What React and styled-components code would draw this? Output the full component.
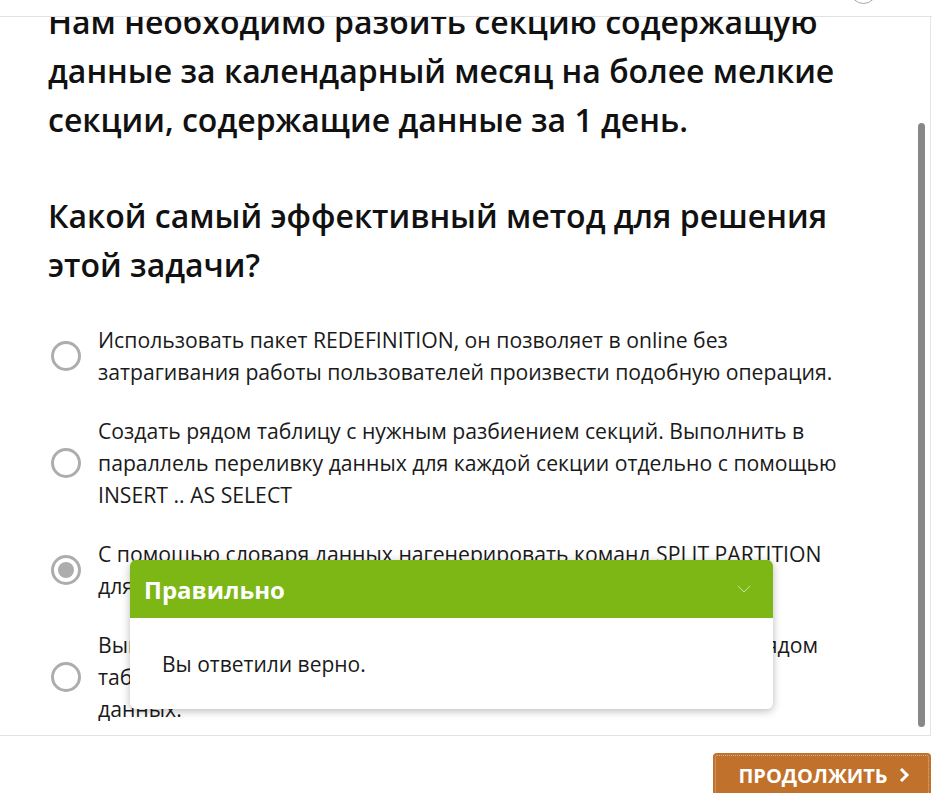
import React, { useLayoutEffect, useRef } from "react";
import styled, { createGlobalStyle } from "styled-components";

const GlobalStyle = createGlobalStyle`
  html, body {
    margin: 0;
    padding: 0;
    background: #fff;
  }
  body {
    font-family: "Open Sans", "Noto Sans", sans-serif;
    color: #1a1a1a;
  }
`;

const options = [
  {
    id: 1,
    text: "Использовать пакет REDEFINITION, он позволяет в online без затрагивания работы пользователей произвести подобную операция.",
  },
  {
    id: 2,
    text: "Создать рядом таблицу с нужным разбиением секций. Выполнить в параллель переливку данных для каждой секции отдельно с помощью INSERT .. AS SELECT",
  },
  {
    id: 3,
    text: "С помощью словаря данных нагенерировать команд SPLIT PARTITION\nдля каждого дня.",
  },
  {
    id: 4,
    text: "Выгрузить данные во внешний файл и создать новую таблицу рядом\nтаблицу с нужным разбиением и залить туда выгрузку всех.\nданных.",
  },
];

const App = () => {
  const scrollRef = useRef(null);

  useLayoutEffect(() => {
    if (scrollRef.current) scrollRef.current.scrollTop = 44;
  }, []);

  return (
    <Page>
      <GlobalStyle />
      <TopBar>
        <TopCircle />
      </TopBar>
      <ScrollFrame>
        <ScrollArea ref={scrollRef}>
          <Content>
            <Heading>
              Нам необходимо разбить секцию содержащую данные за календарный
              месяц на более мелкие секции, содержащие данные за 1 день.
            </Heading>
            <Heading>Какой самый эффективный метод для решения этой задачи?</Heading>
            <OptionList>
              {options.map((o) => (
                <Option key={o.id}>
                  <Radio $checked={o.id === 3} />
                  <OptionText>{o.text}</OptionText>
                </Option>
              ))}
            </OptionList>
          </Content>
        </ScrollArea>
        <ScrollThumb />
      </ScrollFrame>
      <Footer>
        <ContinueButton>
          Продолжить
          <svg width="12" height="16" viewBox="0 0 12 16">
            <path d="M3 2 L9 8 L3 14" fill="none" stroke="#fff" strokeWidth="3" />
          </svg>
        </ContinueButton>
      </Footer>
      <Feedback>
        <FeedbackHeader>
          <span>Правильно</span>
          <svg width="14" height="8" viewBox="0 0 14 8">
            <path d="M1 1 L7 7 L13 1" fill="none" stroke="rgba(255,255,255,0.6)" strokeWidth="1" />
          </svg>
        </FeedbackHeader>
        <FeedbackBody>Вы ответили верно.</FeedbackBody>
      </Feedback>
    </Page>
  );
};

const Page = styled.div`
  position: relative;
  width: 932px;
  height: 793px;
  display: flex;
  flex-direction: column;
  overflow: hidden;
`;

const TopBar = styled.div`
  height: 16px;
  flex: none;
  border-bottom: 1px solid #e2e2e2;
  display: flex;
  justify-content: flex-end;
  align-items: flex-end;
  padding-right: 55px;
  overflow: hidden;
`;

const TopCircle = styled.div`
  width: 25px;
  height: 25px;
  border-radius: 50%;
  border: 1px solid #a8a8a8;
  margin-bottom: 12px;
  flex: none;
`;

const ScrollFrame = styled.div`
  position: relative;
  flex: 1;
  min-height: 0;
  margin-right: 1px;
  border-right: 1px solid #e4e4e4;
  border-bottom: 1px solid #e2e2e2;
  display: flex;
`;

const ScrollArea = styled.div`
  flex: 1;
  overflow: hidden;
`;

const ScrollThumb = styled.div`
  position: absolute;
  top: 106px;
  right: 5px;
  width: 7px;
  height: 604px;
  border-radius: 4px;
  background: #888;
`;

const Content = styled.div`
  padding: 24px 68px 40px 48px;
`;

const Heading = styled.h2`
  margin: 0 0 47px;
  font-size: 32px;
  font-weight: 600;
  line-height: 49px;
  color: #111;
`;

const OptionList = styled.div`
  display: flex;
  flex-direction: column;
  gap: 27px;
  margin-top: -12px;
`;

const Option = styled.label`
  display: flex;
  align-items: center;
  gap: 17px;
  padding-left: 3px;
`;

const Radio = styled.span`
  flex: none;
  width: 30px;
  height: 30px;
  box-sizing: border-box;
  border-radius: 50%;
  border: 3px solid #adadad;
  display: flex;
  align-items: center;
  justify-content: center;

  &::after {
    content: "";
    width: 16px;
    height: 16px;
    border-radius: 50%;
    background: #adadad;
    display: ${(p) => (p.$checked ? "block" : "none")};
  }
`;

const OptionText = styled.span`
  font-size: 21.2px;
  line-height: 32px;
  color: #1a1a1a;
  white-space: pre-line;
`;

const Footer = styled.div`
  flex: none;
  height: 57px;
  display: flex;
  justify-content: flex-end;
  align-items: flex-start;
  padding: 17px 1px 0 0;
  box-sizing: border-box;
`;

const ContinueButton = styled.button`
  width: 218px;
  height: 46px;
  flex: none;
  border: none;
  border-radius: 4px;
  background: #c0712b;
  outline: 1px dotted rgba(255, 255, 255, 0.45);
  outline-offset: -3px;
  color: #fff;
  font-family: "Open Sans", sans-serif;
  font-size: 20px;
  font-weight: 700;
  text-transform: uppercase;
  display: flex;
  align-items: center;
  justify-content: center;
  gap: 10px;
  padding: 0 0 2px 4px;
`;

const Feedback = styled.div`
  position: absolute;
  left: 130px;
  top: 560px;
  width: 643px;
  border-radius: 6px;
  background: #fff;
  box-shadow: 0 2px 8px rgba(0, 0, 0, 0.28);
  overflow: hidden;
`;

const FeedbackHeader = styled.div`
  height: 58px;
  background: #7cb716;
  display: flex;
  align-items: center;
  justify-content: space-between;
  padding: 0 22px 0 14px;
  color: #fff;
  font-size: 24px;
  font-weight: 700;
`;

const FeedbackBody = styled.div`
  height: 91px;
  display: flex;
  align-items: center;
  padding: 0 32px;
  font-size: 21px;
  color: #1a1a1a;
`;

export default App;
